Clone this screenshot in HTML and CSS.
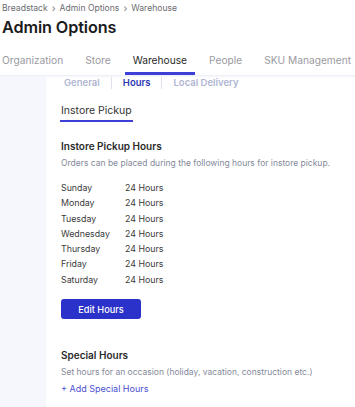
FILE: index.html
```html
<!DOCTYPE html>
<html>
<head>
<meta charset="utf-8">
<link rel="stylesheet" href="styles.css">
</head>
<body>
<div class="header">
  <div class="crumbs"><span>Breadstack</span><span class="sep">›</span><span>Admin Options</span><span class="sep">›</span><span>Warehouse</span></div>
  <h1 class="title">Admin Options</h1>
</div>
<nav class="tabs">
  <div class="tab">Organization</div>
  <div class="tab">Store</div>
  <div class="tab active">Warehouse</div>
  <div class="tab">People</div>
  <div class="tab">SKU Management</div>
</nav>
<div class="layout">
  <aside class="sidebar"></aside>
  <main class="content">
    <div class="subtabs">
      <div class="subtab">General</div>
      <div class="divider"></div>
      <div class="subtab current">Hours</div>
      <div class="divider"></div>
      <div class="subtab">Local Delivery</div>
    </div>
    <div class="section-tabs"><div class="section-tab">Instore Pickup</div></div>
    <h2 class="heading">Instore Pickup Hours</h2>
    <p class="desc">Orders can be placed during the following hours for instore pickup.</p>
    <div class="hours">
      <div class="row"><span class="day">Sunday</span><span>24 Hours</span></div>
      <div class="row"><span class="day">Monday</span><span>24 Hours</span></div>
      <div class="row"><span class="day">Tuesday</span><span>24 Hours</span></div>
      <div class="row"><span class="day">Wednesday</span><span>24 Hours</span></div>
      <div class="row"><span class="day">Thursday</span><span>24 Hours</span></div>
      <div class="row"><span class="day">Friday</span><span>24 Hours</span></div>
      <div class="row"><span class="day">Saturday</span><span>24 Hours</span></div>
    </div>
    <button class="btn">Edit Hours</button>
    <h2 class="heading special">Special Hours</h2>
    <p class="desc desc2">Set hours for an occasion (holiday, vacation, construction etc.)</p>
    <a class="link">+ Add Special Hours</a>
  </main>
</div>
</body>
</html>
```
FILE: styles.css
```css
html, body { margin: 0; padding: 0; background: #fff; }
body { font-family: Inter, "Noto Sans", sans-serif; color: #2a2a2a; overflow: hidden; width: 355px; height: 407px; }
.header { padding: 3px 0 0 2px; }
.crumbs { font-size: 8.6px; line-height: 10px; color: #6b6b70; display: flex; gap: 4px; align-items: center; white-space: nowrap; }
.crumbs .sep { font-size: 10px; color: #777; }
.title { margin: 3px 0 0 0; font-size: 16.2px; font-weight: 600; line-height: 22px; color: #1b1b1d; letter-spacing: -0.1px; }
.tabs { display: flex; gap: 6px; margin: 15px 0 0 -6px; border-bottom: 1px solid #eef0f7; box-shadow: 0 1px 2px rgba(120,130,180,0.08); }
.tab { padding: 0 8px 5px 8px; font-size: 10.2px; line-height: 14px; color: #9a9aa0; white-space: nowrap; border-bottom: 3px solid transparent; }
.tab.active { color: #2a2a2a; border-bottom-color: #3d3fd6; }
.layout { display: flex; height: 340px; }
.sidebar { width: 46px; background: #f5f7fd; flex: none; }
.content { flex: 1; padding-left: 15px; }
.subtabs { display: flex; align-items: center; height: 13px; margin-left: 2px; }
.subtab { padding: 0 11px; font-size: 9.5px; font-weight: 600; color: #b0b6d2; line-height: 13px; }
.subtab:first-child { padding-left: 1px; }
.subtab.current { color: #2d39b0; }
.divider { width: 1px; height: 12px; background: #dfe2ee; }
.section-tabs { margin-top: 15px; display: flex; }
.section-tab { font-size: 10.5px; line-height: 13px; color: #333; padding: 0 1px 3px 0; border-bottom: 2px solid #3d3fd6; margin-left: -1px; padding-left: 1px; white-space: nowrap; }
.heading { margin: 17px 0 0 0; font-size: 10px; font-weight: 600; color: #2a2a2a; line-height: 14px; white-space: nowrap; }
.desc { margin: 4px 0 0 0; font-size: 8.5px; color: #858a9a; line-height: 12px; white-space: nowrap; }
.hours { margin-top: 11px; }
.row { display: flex; font-size: 8.8px; line-height: 15.3px; color: #3a3a3a; }
.day { width: 64px; }
.btn { margin-top: 12px; width: 80px; height: 20px; border: none; border-radius: 3px; background: #2b32c9; color: #fff; font-family: Inter, sans-serif; font-size: 9.2px; font-weight: 500; padding: 0; display: block; }
.heading.special { margin-top: 29px; }
.desc2 { margin-top: 4px; }
.link { display: block; margin-top: 5px; font-size: 9px; color: #4a4fd2; line-height: 12px; }
```
